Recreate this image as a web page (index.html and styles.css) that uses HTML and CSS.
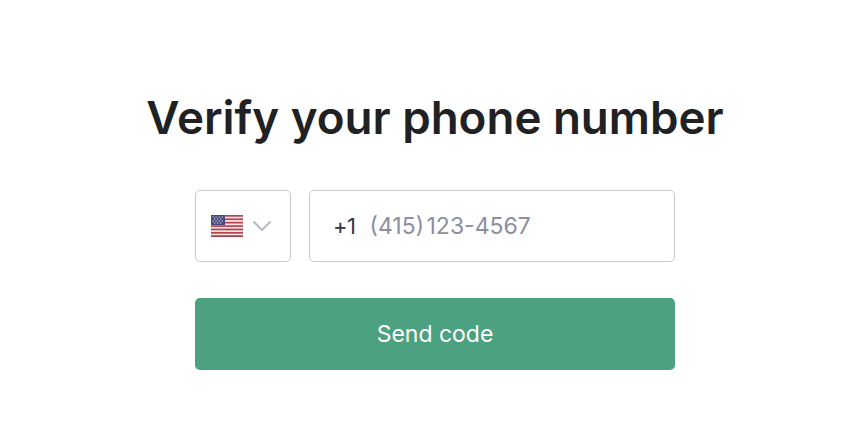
FILE: index.html
```html
<!DOCTYPE html>
<html lang="en">
<head>
  <meta charset="UTF-8">
  <title>Verify your phone number</title>
  <link rel="stylesheet" href="styles.css">
</head>
<body>
  <div class="container">
    <h1 class="title">Verify your phone number</h1>

    <div class="phone-row">
      <div class="country-select">
        <svg class="flag" width="32" height="22" viewBox="0 0 32 22">
          <rect width="32" height="22" fill="#f3e6e6"/>
          <rect y="0" width="32" height="1.7" fill="#b8434f"/>
          <rect y="3.4" width="32" height="1.7" fill="#b8434f"/>
          <rect y="6.8" width="32" height="1.7" fill="#b8434f"/>
          <rect y="10.2" width="32" height="1.7" fill="#b8434f"/>
          <rect y="13.6" width="32" height="1.7" fill="#b8434f"/>
          <rect y="17" width="32" height="1.7" fill="#b8434f"/>
          <rect y="20.3" width="32" height="1.7" fill="#a83a46"/>
          <rect width="14" height="10" fill="#4a4a80"/>
          <g fill="#c9c9dc">
            <rect x="1.5" y="1.5" width="1.2" height="1.2"/>
            <rect x="4.5" y="1.5" width="1.2" height="1.2"/>
            <rect x="7.5" y="1.5" width="1.2" height="1.2"/>
            <rect x="10.5" y="1.5" width="1.2" height="1.2"/>
            <rect x="3" y="3.5" width="1.2" height="1.2"/>
            <rect x="6" y="3.5" width="1.2" height="1.2"/>
            <rect x="9" y="3.5" width="1.2" height="1.2"/>
            <rect x="1.5" y="5.5" width="1.2" height="1.2"/>
            <rect x="4.5" y="5.5" width="1.2" height="1.2"/>
            <rect x="7.5" y="5.5" width="1.2" height="1.2"/>
            <rect x="10.5" y="5.5" width="1.2" height="1.2"/>
            <rect x="3" y="7.5" width="1.2" height="1.2"/>
            <rect x="6" y="7.5" width="1.2" height="1.2"/>
            <rect x="9" y="7.5" width="1.2" height="1.2"/>
          </g>
        </svg>
        <svg class="chevron" width="20" height="12" viewBox="0 0 20 12">
          <path d="M1.5 1.5 L10 10 L18.5 1.5" fill="none" stroke="#b9b7c8" stroke-width="2"/>
        </svg>
      </div>
      <div class="phone-input">
        <span class="dial-code">+1</span>
        <span class="placeholder">(415) 123-4567</span>
      </div>
    </div>

    <button class="send-btn">Send code</button>
  </div>
</body>
</html>
```

FILE: styles.css
```css
body {
  margin: 0;
  padding-left: 16px;
  background-color: #fff;
  font-family: Inter, "Liberation Sans", sans-serif;
}

.container {
  width: 480px;
  margin: 0 auto;
  padding-top: 90px;
  display: flex;
  flex-direction: column;
  align-items: center;
}

.title {
  margin: 0 -60px;
  font-size: 45.7px;
  line-height: 56px;
  font-weight: 600;
  color: #202123;
  white-space: nowrap;
}

.phone-row {
  display: flex;
  gap: 18px;
  width: 100%;
  margin-top: 44px;
}

.country-select {
  box-sizing: border-box;
  width: 96px;
  height: 72px;
  padding-left: 15px;
  display: flex;
  align-items: center;
  gap: 9px;
  border: 1px solid #c9c7d6;
  border-radius: 5px;
}

.phone-input {
  box-sizing: border-box;
  flex: 1;
  height: 72px;
  padding-left: 23px;
  display: flex;
  align-items: center;
  gap: 14px;
  border: 1px solid #c9c7d6;
  border-radius: 5px;
  font-size: 22px;
}

.dial-code {
  color: #353740;
  letter-spacing: -0.5px;
}

.placeholder {
  font-size: 23px;
  word-spacing: -4px;
  color: #8e8ea0;
}

.send-btn {
  width: 100%;
  height: 72px;
  margin-top: 36px;
  background-color: #4ba180;
  color: #fff;
  border: none;
  border-radius: 5px;
  font-family: inherit;
  font-size: 23px;
  cursor: pointer;
}
```
